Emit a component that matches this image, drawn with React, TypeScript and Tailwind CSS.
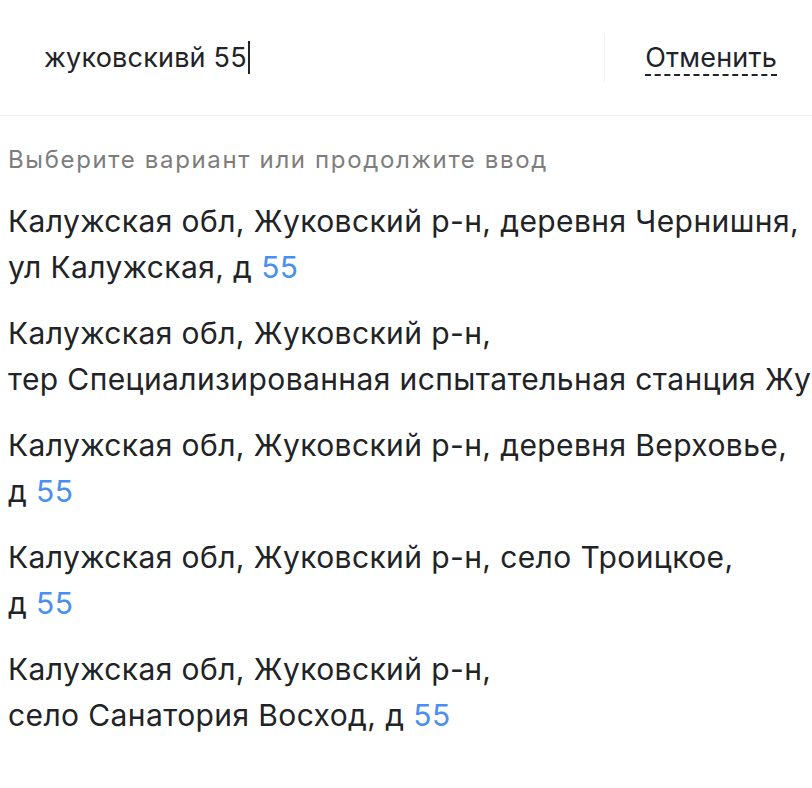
import React from "react";

type Suggestion = { lines: string[]; house: string };

const suggestions: Suggestion[] = [
  { lines: ["Калужская обл, Жуковский р-н, деревня Чернишня,", "ул Калужская, д "], house: "55" },
  { lines: ["Калужская обл, Жуковский р-н,", "тер Специализированная испытательная станция Жуковский, д "], house: "55" },
  { lines: ["Калужская обл, Жуковский р-н, деревня Верховье,", "д "], house: "55" },
  { lines: ["Калужская обл, Жуковский р-н, село Троицкое,", "д "], house: "55" },
  { lines: ["Калужская обл, Жуковский р-н,", "село Санатория Восход, д "], house: "55" },
];

export default function App() {
  return (
    <div className="min-h-[788px] w-[812px] overflow-hidden bg-white text-[#222326] font-['Inter','Noto_Sans',sans-serif]">
      {/* search bar */}
      <div className="flex h-[116px] items-center border-b border-[#efefef]">
        <div className="flex flex-1 items-center pl-[44px]">
          <span className="text-[27px] leading-[34px] tracking-[0.2px]">жуковскивй 55</span>
          <span className="ml-[1px] h-[33px] w-[2px] bg-[#222326]" />
        </div>
        <div className="h-[48px] w-px bg-[#f1f1f1]" />
        <button className="pl-[40px] pr-[35px] text-[27px] leading-[30px] tracking-[0.2px] text-[#222326]">
          <span className="border-b-2 border-dashed border-[#222326]">Отменить</span>
        </button>
      </div>

      {/* suggestions */}
      <div className="pt-[28px]">
        <p className="px-[8px] text-[24px] leading-[32px] tracking-[1.65px] text-[#7d7d7d]">
          Выберите вариант или продолжите ввод
        </p>
        <ul className="mt-[12px]">
          {suggestions.map((s, i) => (
            <li key={i} className="cursor-pointer px-[8px] py-[10px] text-[30px] leading-[46px] tracking-[0.4px]">
              {s.lines.map((line, j) => (
                <div key={j} className="whitespace-nowrap">
                  {line}
                  {j === s.lines.length - 1 && <span className="text-[#4a8ff0]">{s.house}</span>}
                </div>
              ))}
            </li>
          ))}
        </ul>
      </div>
    </div>
  );
}
